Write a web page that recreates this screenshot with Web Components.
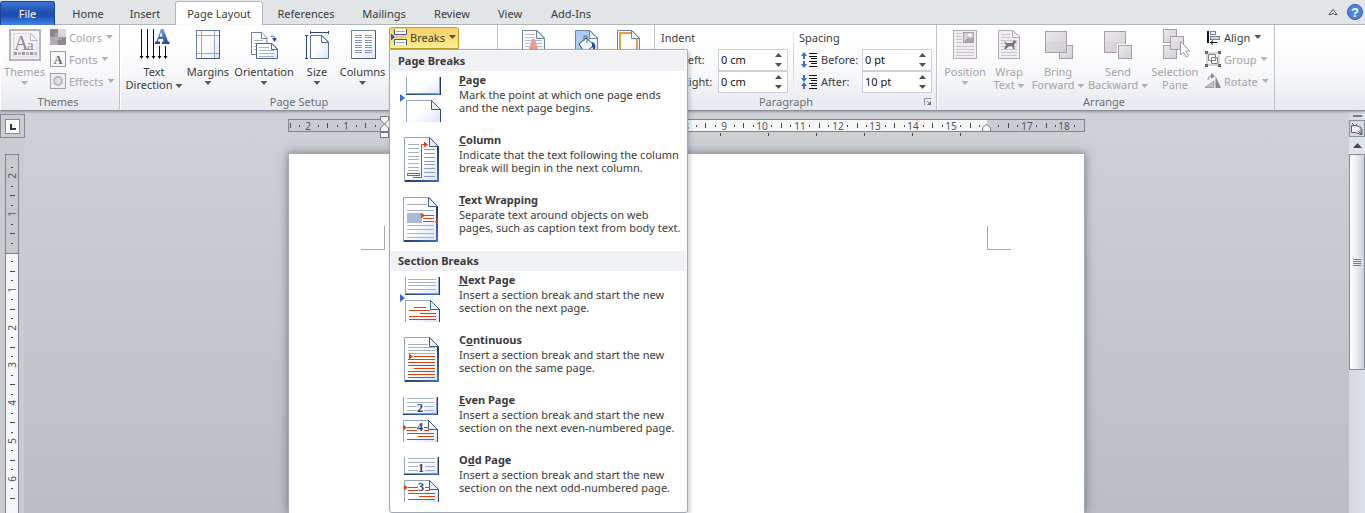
<!DOCTYPE html>
<html lang="en">
<head>
<meta charset="utf-8">
<title>Word - Page Layout</title>
<style>
html, body { margin: 0; height: 100%; overflow: hidden; }
body { font: 11px/13px "Noto Sans", "Open Sans", sans-serif; color: #3b3b3b; }
</style>
</head>
<body>
<word-window></word-window>
<script>
/* ---------- icon drawings ---------- */
const defs = `<defs>
<linearGradient id="pg" x1="0" y1="0" x2="1" y2="1"><stop offset=".5" stop-color="#fff"/><stop offset="1" stop-color="#d9e5fa"/></linearGradient>
<linearGradient id="ed" x1="0" y1="0" x2="1" y2="0"><stop offset="0" stop-color="#2b3f66"/><stop offset="1" stop-color="#3f6ec4"/></linearGradient>
<linearGradient id="ev" x1="0" y1="0" x2="0" y2="1"><stop offset="0" stop-color="#23365c"/><stop offset="1" stop-color="#4575cc"/></linearGradient>
<linearGradient id="gy" x1="0" y1="0" x2="1" y2="1"><stop offset="0" stop-color="#ece9ee"/><stop offset="1" stop-color="#d3cfd5"/></linearGradient>
<linearGradient id="bl" x1="0" y1="0" x2="0" y2="1"><stop offset="0" stop-color="#6fa0ee"/><stop offset="1" stop-color="#1c449c"/></linearGradient>
</defs>`;
const hl = (x1, x2, ys, c, w = 1) => ys.map(y => `<path d="M${x1} ${Math.floor(y) + .5}H${x2}" stroke="${c}" stroke-width="${w}"/>`).join('');
/* bottom part of a sheet, open at the top */
const sheetTop = x => `<rect x="${x}" y="2" width="34" height="17" fill="url(#pg)"/><path d="M${x + .5} 2V19" stroke="#8fa3c4"/><rect x="${x}" y="18" width="35" height="1" fill="#7f9bd0"/><rect x="${x}" y="19" width="35" height="1" fill="url(#ed)"/><rect x="${x + 33}" y="2" width="1" height="17" fill="#8aa6dc"/><rect x="${x + 34}" y="2" width="1" height="18" fill="#23365c"/>`;
/* top part of a sheet with a folded corner, open at the bottom */
const sheetBottom = x => `<path d="M${x + .5} 47V25.5H${x + 26}L${x + 34} 34V47Z" fill="url(#pg)"/><path d="M${x + .5} 47V25.5H${x + 26}" fill="none" stroke="#8fa3c4"/><path d="M${x + 25.5} 25.5L${x + 34.5} 34.5H${x + 25.5}Z" fill="#eef4ff" stroke="#3f5a8c"/><path d="M${x + 34.5} 34V47" stroke="#2d4778"/>`;
const sheetFull = x => `<path d="M${x + .5} 2.5H${x + 26}L${x + 34} 11V46.5H${x + .5}Z" fill="url(#pg)" stroke="#8fa3c4"/><rect x="${x + 1}" y="45" width="34" height="2" fill="url(#ed)"/><rect x="${x + 33}" y="11" width="2" height="36" fill="url(#ev)"/><path d="M${x + 25.5} 2.5L${x + 34.5} 11.5H${x + 25.5}Z" fill="#eef4ff" stroke="#3f5a8c"/>`;
const blueArrow = '<path d="M1 19L6 23L1 27Z" fill="#3a6ad8"/>';
const redArrow = (x, y) => `<path d="M${x} ${y - 3}L${x + 4} ${y}L${x} ${y + 3}Z" fill="#d8430f"/>`;
const L = '#a3b1cc', R = '#d8430f';
const num = (x, y, t) => `<text x="${x}" y="${y}" font-family="Liberation Serif, serif" font-weight="bold" font-size="12" fill="#1f3c78" text-anchor="middle">${t}</text>`;
const parity = (x, a, b) => sheetTop(x) + hl(x + 4, x + 31, [3, 7, 11, 15], L) + `<rect x="${x + 14}" y="9" width="7" height="9" fill="#fff"/>` + num(x + 17, 17, a)
  + sheetBottom(x) + hl(x + 4, x + 26, [32, 35], R) + hl(x + 4, x + 31, [38, 44], R) + hl(x + 15, x + 31, [41], R) + redArrow(x, 32.5) + `<rect x="${x + 14}" y="28" width="7" height="9" fill="#fff"/>` + num(x + 17, 36, b);
const page24 = (inner, c = '#6b83ab') => `<path d="M5.5 1.5H20L27.5 9V31H5.5Z" fill="url(#pg)" stroke="${c}"/>${inner}<path d="M19.5 1.5V9.5H27.5Z" fill="#f2f6ff" stroke="${c}"/>`;
const box = (x, y, s, h = s) => `<rect x="${x}.5" y="${y}.5" width="${s}" height="${h}" fill="url(#gy)" stroke="#a5a0a6"/>`;
const ud = (x, y, up, c = '#3a6fd8') => up ? `<path d="M${x - 3} ${y + 4}l3-4l3 4h-2v3h-2v-3z" fill="${c}"/>` : `<path d="M${x - 3} ${y + 4}l3 4l3-4h-2v-3h-2v3z" fill="${c}"/>`;

const ICONS = {
  themes: [32, 32, `<rect x="1" y="1" width="30" height="30" fill="#f7f4f8" stroke="#b9b4bb" stroke-width="2"/><path d="M4.5 4.5H22L28 11V28H4.5Z" fill="#f3f0f4" stroke="#dcd8de"/><path d="M21.5 4.5V11.5H28.5Z" fill="#fff" stroke="#b9b4bb"/><text x="5" y="21" font-family="Liberation Serif, serif" font-size="20" fill="#8d888f">A</text><text x="18" y="21" font-family="Liberation Serif, serif" font-size="15" fill="#8d888f">a</text>` + [5, 9, 13, 17, 21, 25].map((x, i) => `<rect x="${x}" y="23" width="3" height="3" fill="${i % 2 ? '#b9b4bb' : '#9b969d'}"/>`).join('')],
  colors: [16, 16, '<rect width="8" height="8" fill="#8d8890"/><rect x="8" width="8" height="8" fill="#ddd8de"/><rect y="8" width="8" height="8" fill="#b1acb3"/><rect x="8" y="8" width="8" height="8" fill="#8f8a91"/><rect x="5" y="4" width="7" height="7" fill="#c9c4ca" opacity=".4"/>'],
  fonts: [16, 16, '<rect x=".5" y=".5" width="15" height="15" fill="#f8f6f9" stroke="#a39ea5"/><text x="8" y="13" text-anchor="middle" font-family="Liberation Serif, serif" font-weight="bold" font-size="12" fill="#6c686e">A</text>'],
  effects: [16, 16, '<rect x=".5" y=".5" width="15" height="15" fill="#f1eef2" stroke="#a39ea5"/><circle cx="8" cy="8" r="4" fill="#e2dee4" stroke="#bdb8bf" stroke-width="2"/>'],
  textdir: [32, 32, '<path d="M3.5 0V29M9.5 0V29M15.5 0V29M21.5 17V29M27.5 17V29" stroke="#111"/><path d="M1.5 27h4l-2 3zM7.5 27h4l-2 3zM13.5 27h4l-2 3zM19.5 27h4l-2 3zM25.5 27h4l-2 3z" fill="#111"/><path fill-rule="evenodd" d="M22.5 0h3l4.500 12.500h1.500V15H24v-2.500h1.800l-.8-2.500h-4.300l-.9 2.500H22V15h-5v-2.500h1.500L22.300 2zM21.500 7.500h3L23 3z" fill="url(#bl)"/>'],
  margins: [26, 32, '<rect x="1.5" y="1.5" width="23" height="28" fill="url(#pg)" stroke="#6b83ab"/><path d="M6.5 2V29M19.5 2V29M2 6.5H24M2 24.5H24" stroke="#8fa9cf"/><path d="M24.500 2V29.500H2" fill="none" stroke="#47597c"/>'],
  orientation: [32, 32, '<path d="M3.5 3.5H14L19 9V25.5H3.5Z" fill="url(#pg)" stroke="#6b83ab"/><path d="M13.5 3.5V9.5H19" fill="#fff" stroke="#6b83ab"/>' + hl(6, 15, [11, 14, 17, 20], L) + '<path d="M8.5 14.5H24L29.5 20V29.5H8.5Z" fill="url(#pg)" stroke="#4f678f"/><path d="M23.5 14.5V20.5H29.5Z" fill="#fff" stroke="#4f678f"/>' + hl(11, 21, [18], L) + hl(11, 26, [21, 24, 27], L) + '<path d="M23 7.500c3-1 4 0 4 3" fill="none" stroke="#33507f"/><path d="M24 9h5l-2.500 4z" fill="#33507f"/>'],
  size: [32, 32, '<path d="M9.5 6.5H21L27.5 13V29.5H9.5Z" fill="url(#pg)" stroke="#5d7398"/><path d="M20.5 6.5V13.5H27.5Z" fill="#fff" stroke="#4f678f"/><path d="M10 3.5H27M9.5 2V5M27.5 2V5M5.5 7V29M4 6.5H7M4 29.5H7" stroke="#2c3f90"/>'],
  columns: [28, 32, '<rect x="2.5" y="1.5" width="24" height="28" fill="url(#pg)" stroke="#6b83ab"/>' + hl(6, 13, [6, 8, 11, 13, 16, 18, 21, 23], '#7f97c0') + hl(16, 23, [6, 8, 11, 13, 16, 18, 21, 23], '#7f97c0') + '<path d="M26.5 2V29.5H3" fill="none" stroke="#47597c"/>'],
  breaks: [16, 16, '<path d="M0 4.5L4 8L0 11.5Z" fill="#2554c4"/><path d="M3.5 0V5.5H15.5V0" fill="#fff" stroke="#41598c"/><path d="M3.5 16V10.5H15.5V16" fill="#fff" stroke="#41598c"/><path d="M5 2.5H14M5 13.5H14" stroke="#8fa6cf"/><path d="M5 8h10" stroke="#8fa6cf" stroke-dasharray="2 1"/>'],
  watermark: [32, 32, page24(hl(8, 25, [11, 14, 17, 20, 23, 26], '#b4bccb') + hl(8, 18, [5, 8], '#b4bccb') + '<path d="M15 10h3l5 17h-3l-1.5-4h-4L13 27h-3z" fill="#ea9c94"/>')],
  pagecolor: [32, 32, page24('<rect x="6" y="2" width="14" height="28" fill="#a9cdf3"/><path d="M9 15l7-6 8 7-9 8z" fill="#f2f6fb" stroke="#33435f"/><path d="M14 12V7h3v7" fill="none" stroke="#5a6a84"/><path d="M22 13c4 1 4 6 2 9l-2-5z" fill="#254a92"/>')],
  borders: [32, 32, page24('<path d="M20 4H8V29H25V9" fill="none" stroke="#e79b4d" stroke-width="2"/>')],
  before: [16, 16, ud(3, 0, true) + ud(3, 8, false) + hl(8, 16, [1, 4, 9, 14], '#111') + hl(10, 16, [6, 11], '#111')],
  after: [16, 16, ud(3, 0, false) + ud(3, 8, true) + hl(8, 16, [1, 4, 9, 14], '#111') + hl(10, 16, [6, 11], '#111')],
  indent: [16, 16, hl(2, 14, [2, 6, 10, 14], '#555')],
  position: [26, 32, '<rect x="1.5" y="1.5" width="23" height="28" fill="#f1edf2" stroke="#b1acb2"/>' + hl(4, 10, [4, 7, 10, 13], '#cac5cb') + hl(4, 22, [17, 20, 23, 26], '#cac5cb') + '<rect x="11.5" y="3.5" width="10" height="10" fill="#d8d3d9" stroke="#a39ea4"/><path d="M12 13l4-5 2 2 2-2 2 4v1z" fill="#aaa5ab"/><circle cx="18" cy="6" r="1.5" fill="#fff"/>'],
  wrap: [32, 32, '<path d="M5.5 1.5H20L26.5 8V29.5H5.5Z" fill="#f1edf2" stroke="#b1acb2"/><path d="M19.5 1.5V8.5H26.5Z" fill="#fff" stroke="#b1acb2"/>' + hl(8, 17, [5, 8], '#cac5cb') + hl(8, 24, [11, 14, 17, 20, 23, 26], '#cac5cb') + '<path d="M11 12l3 2h5l2-3 3 2-2 1-1 3 1 3h-2l-1-3h-3l-3 3h-2l2-4z" fill="#7c777d"/>'],
  forward: [32, 32, box(17, 16, 13) + box(3, 2, 21) + '<rect x="4" y="13" width="20" height="10" fill="#d3cdd4" opacity=".5"/>'],
  backward: [32, 32, box(2, 2, 21) + '<rect x="3" y="13" width="20" height="10" fill="#d3cdd4" opacity=".5"/><rect x="15" y="15" width="16" height="16" fill="#fff"/>' + box(16, 16, 13)],
  selection: [32, 32, box(4, 0, 13) + box(4, 16, 13) + box(11, 7, 13) + '<path d="M21.5 12.5V26l3-3 2.500 5 2.500-1-2.500-5h4z" fill="#fff" stroke="#a09ba1"/>'],
  align: [16, 16, '<path d="M3 2V14" stroke="#111" stroke-width="2"/><rect x="5.5" y="2.5" width="5" height="3" fill="#e8eef8" stroke="#7a8494"/><rect x="5.5" y="7.5" width="9" height="3" fill="#c5d6f0" stroke="#7a8494"/><path d="M5 13.5H12M8 11.500l-2.500 2 2.500 2" fill="none" stroke="#111"/>'],
  group: [16, 16, '<path d="M2 2H14V14H2Z" fill="none" stroke="#b5b0b6"/><path d="M3.5 3.5h7v6h-7zM6.5 6.5h6v6h-6z" fill="none" stroke="#858086"/><path d="M0 0h3v3H0zM13 0h3v3h-3zM0 13h3v3H0zM13 13h3v3h-3z" fill="#6a666b"/>'],
  rotate: [16, 16, '<path d="M0 14.5H9V8z" fill="#c4bfc5" stroke="#a5a0a6"/><path d="M10.5 3V15H16z" fill="#8b868c"/><path d="M3 7c0-3 2-4 4-4" fill="none" stroke="#8b868c"/><path d="M6 0l4 3-4 3z" fill="#8b868c"/>'],
  m_page: [44, 50, blueArrow + sheetTop(7) + sheetBottom(7)],
  m_column: [44, 50, sheetFull(5) + hl(9, 20, [9, 13, 17, 21, 24, 28, 32, 35], L) + hl(25, 36, [14, 18, 22, 26, 29, 33, 37, 41], '#8d9dbe') + '<path d="M8.5 38.5H20.5V40.5H8.5ZM14 42.5H22.5V9.5H29" fill="none" stroke="#d8430f"/>' + redArrow(25, 9.5)],
  m_wrap: [44, 50, sheetFull(4) + hl(8, 28, [9], L) + hl(8, 35, [15, 30, 34, 38, 42], L) + '<rect x="8" y="18" width="15" height="10" fill="#a9b8d6"/>' + hl(24, 35, [20, 23, 26], R) + redArrow(22, 20.5) + '<path d="M39 23.5l-3 3 3 3z" fill="#d8430f"/>'],
  m_next: [44, 50, blueArrow + sheetTop(6) + hl(9, 37, [4, 7, 10, 14], L) + sheetBottom(6) + hl(15, 27, [32], R) + hl(10, 31, [35], R) + hl(21, 37, [38], R) + hl(10, 37, [41, 44], R)],
  m_cont: [44, 50, sheetFull(5) + hl(9, 29, [9], L) + hl(9, 36, [12, 15, 18], L) + hl(15, 36, [21], R) + hl(9, 36, [24, 27, 30], R) + hl(15, 36, [33], R) + hl(9, 36, [36, 39, 42], R) + redArrow(10, 21.5)],
  m_even: [44, 50, parity(4, '2', '4')],
  m_odd: [44, 50, parity(5, '1', '3')],
  caret: [10, 8, '<path d="M1 6.5L5 1.5L9 6.5H6.500L5 5L3.500 6.500Z" fill="#fff" stroke="#444"/>'],
  help: [16, 16, '<circle cx="8" cy="8" r="7.5" fill="#4b84dd" stroke="#2b5db5"/><text x="8" y="13" text-anchor="middle" font-family="Liberation Sans, sans-serif" font-weight="bold" font-size="13" fill="#fff">?</text>'],
  launcher: [8, 8, '<path d="M.5 7V.5H7" fill="none" stroke="#8a8f98"/><path d="M3 3l3 3" stroke="#8a8f98"/><path d="M7 3V7H3z" fill="#6f747d"/>'],
  tabstop: [13, 13, '<rect width="13" height="13" fill="#fff"/><path d="M5 4V9H10" fill="none" stroke="#333" stroke-width="2"/>'],
  rulertoggle: [14, 14, '<path d="M1.5 3.5H6L11 5.5V12.5L5 10.5H1.500ZM2 1l3 3 2-2M8 9l4 4v-6" fill="#fbeff3" stroke="#555c66"/>'],
  up: [9, 5, '<path d="M0 5L4.5 0L9 5Z" fill="#444b55"/>'],
};

/* ---------- element helper ---------- */
function define(name, css, html, ready) {
  const t = document.createElement('template');
  t.innerHTML = `<style>*{box-sizing:border-box}button,input{font:inherit;color:inherit;margin:0;padding:0;border:0;background:none}${css}</style>`;
  customElements.define(name, class extends HTMLElement {
    connectedCallback() {
      if (this.shadowRoot) return;
      const root = this.attachShadow({ mode: 'open' });
      root.append(t.content.cloneNode(true));
      const body = document.createElement('template');
      body.innerHTML = html(k => this.getAttribute(k) || '', this);
      root.append(body.content);
      if (ready) ready(this, root);
    }
  });
}

define('wd-icon', ':host{display:block;flex:none;line-height:0}svg{display:block}', a => {
  const [w, h, body] = ICONS[a('name')];
  return `<svg width="${w}" height="${h}" viewBox="0 0 ${w} ${h}" fill="none" aria-hidden="true">${defs}${body}</svg>`;
});

define('wd-arrow', `:host{display:inline-block;width:7px;height:4px;background:currentColor;clip-path:polygon(0 0,100% 0,50% 100%);vertical-align:middle;opacity:.85}`, () => '');

define('ribbon-tab', `:host{display:block;min-width:var(--w)}
button{width:100%;height:24px;border:1px solid transparent;border-bottom:0;text-align:center;white-space:nowrap;line-height:16px}
:host([active]) button{background:#fff;border-color:#b3b7bd;border-radius:3px 3px 0 0;height:25px}
:host([file]) button{background:linear-gradient(#3a74d2,#1f50b0 45%,#1c4fb4 60%,#3f86e4);color:#fff;border-color:#1a4390;border-radius:3px 3px 0 0}`,
  a => `<button role="tab"><slot></slot></button>`);

define('ribbon-tabs', `:host{display:flex;height:25px;padding-top:1px;background:#e1e5e8;border-bottom:1px solid #b6babf}
nav{display:flex;flex:1;min-width:0}nav ribbon-tab:first-child{margin-right:3px}nav ribbon-tab[active]{margin-left:3px}
.tools{display:flex;align-items:center;gap:9px;padding:0 2px 2px 0}`,
  () => `<nav role="tablist">${[['File', 55, 'file'], ['Home', 60], ['Insert', 54], ['Page Layout', 88, 'active'], ['References', 86], ['Mailings', 70], ['Review', 66], ['View', 50], ['Add-Ins', 72]]
    .map(([t, w, f]) => `<ribbon-tab ${f || ''} style="--w:${w}px">${t}</ribbon-tab>`).join('')}</nav>
  <div class="tools"><button aria-label="Minimize the Ribbon"><wd-icon name="caret"></wd-icon></button><button aria-label="Help"><wd-icon name="help"></wd-icon></button></div>`);

define('ribbon-group', `:host{display:flex;flex-direction:column;flex:none;width:var(--w);padding-left:1px;border-right:1px solid #bfc3ca;box-shadow:inset 1px 0 #fff}
.body{display:flex;height:68px;padding-top:2px}
footer{display:flex;align-items:center;height:17px;padding-right:4px;color:#6a6e78}
footer span{flex:1;text-align:center}footer button{padding-left:8px}`,
  a => `<div class="body"><slot></slot></div><footer><span>${a('label')}</span>${a('launcher') ? '<button aria-label="Dialog launcher"><wd-icon name="launcher"></wd-icon></button>' : ''}</footer>`);

define('ribbon-button', `:host{display:block;flex:none;width:var(--w)}
button{display:flex;flex-direction:column;align-items:center;width:100%;height:66px;padding-top:2px;white-space:nowrap}
button:disabled{color:#a5a3aa}
.label{padding-top:4px;text-align:center;line-height:13px}
:host([stack]) wd-arrow{display:block;margin:3px auto 0}`,
  (a, el) => `<button ${el.hasAttribute('disabled') ? 'disabled' : ''} aria-label="${a('name') || el.textContent}"><wd-icon name="${a('icon')}"></wd-icon><span class="label"><slot></slot>${el.hasAttribute('drop') ? ' <wd-arrow></wd-arrow>' : ''}</span></button>`);

define('ribbon-small', `:host{display:block}
button{display:flex;align-items:center;gap:3px;height:22px;padding:0 2px 2px 2px;white-space:nowrap}
button:disabled{color:#a5a3aa}
wd-arrow{margin-left:1px}
:host([pressed]) button{border:1px solid #c29b29;border-radius:3px 3px 0 0;background:linear-gradient(#f8d26a,#fbdc74 50%,#fff09a);padding:0 2px 2px 1px}`,
  (a, el) => `<button ${el.hasAttribute('disabled') ? 'disabled' : ''}><wd-icon name="${a('icon')}"></wd-icon><slot></slot><wd-arrow></wd-arrow></button>`);

define('spin-field', `:host{display:flex;align-items:center;height:22px}
label{margin-left:var(--gap);padding-bottom:2px;width:var(--lw);white-space:nowrap}
.box{display:flex;width:70px;height:22px;border:1px solid #cdd0d8;background:#fff}
input{flex:1;min-width:0;padding:0 0 2px 2px;color:#111;outline:0}
.spin{display:grid;grid-template-rows:1fr 1fr;width:17px}
.spin button{display:grid;place-items:center}
.spin wd-arrow{color:#333}.up{transform:rotate(180deg)}`,
  a => `<wd-icon name="${a('icon')}"></wd-icon><label for="f">${a('label')}</label><div class="box"><input id="f" type="text" value="${a('value')}"><div class="spin"><button aria-label="Increase"><wd-arrow class="up"></wd-arrow></button><button aria-label="Decrease"><wd-arrow></wd-arrow></button></div></div>`);

define('spin-section', `:host{display:block}h3{margin:0;padding-left:var(--hp);font:inherit;height:22px;line-height:22px}.rows{padding-left:var(--rp)}`,
  a => `<h3>${a('label')}</h3><div class="rows"><slot></slot></div>`);

/* ---------- Breaks menu ---------- */
define('menu-item', `:host{display:block}
button{display:flex;gap:16px;width:100%;height:60px;padding:4px 4px 0 8px;text-align:left}
.text{display:block;white-space:nowrap}b,.desc{display:block}b{line-height:14px;padding-bottom:1px;margin-top:-2px;}
button:hover{background:#fff3c4}`,
  a => `<button role="menuitem"><wd-icon name="${a('icon')}"></wd-icon><span class="text"><b><slot name="title"></slot></b><span class="desc"><slot></slot></span></span></button>`);

define('menu-heading', `:host{display:block;height:20px;padding-left:7px;background:#f0f1f5;font-weight:bold;line-height:20px}`, () => '<slot></slot>');

define('breaks-menu', `:host{display:block;width:299px;padding:1px;background:#fff;border:1px solid #a2a7b0;border-radius:0 2px 3px 3px;box-shadow:2px 2px 4px rgba(60,60,90,.25)}`,
  () => {
    const item = (icon, title, l1, l2) => `<menu-item icon="${icon}"><span slot="title">${title}</span>${l1}<br>${l2}</menu-item>`;
    const ins = 'Insert a section break and start the new';
    return `<div role="menu" aria-label="Breaks"><menu-heading>Page Breaks</menu-heading>
${item('m_page', '<u>P</u>age', 'Mark the point at which one page ends', 'and the next page begins.')}
${item('m_column', '<u>C</u>olumn', 'Indicate that the text following the column', 'break will begin in the next column.')}
${item('m_wrap', '<u>T</u>ext Wrapping', 'Separate text around objects on web', 'pages, such as caption text from body text.')}
<menu-heading>Section Breaks</menu-heading>
${item('m_next', '<u>N</u>ext Page', ins, 'section on the next page.')}
${item('m_cont', 'C<u>o</u>ntinuous', ins, 'section on the same page.')}
${item('m_even', '<u>E</u>ven Page', ins, 'section on the next even-numbered page.')}
${item('m_odd', 'O<u>d</u>d Page', ins, 'section on the next odd-numbered page.')}</div>`;
  });

/* ---------- ribbon ---------- */
define('word-ribbon', `:host{display:flex;height:86px;background:linear-gradient(#fff 20%,#f6f7f9 60%,#e6e9ee);border-bottom:1px solid #8b9098;box-shadow:0 1px 2px rgba(80,85,95,.45);position:relative;z-index:2}
.col{display:flex;flex-direction:column;align-items:flex-start}
.anchor{position:relative;margin-left:1px}
.anchor breaks-menu{position:absolute;top:100%;left:0}
.rule{width:1px;margin:4px 5px 4px;background:linear-gradient(#eceef1,#c9ccd3,#eceef1)}
.setup{padding-left:2px;display:flex}.bg{display:flex;padding-left:6px}.arr{display:flex;padding-left:2px}.arr .col{padding-left:1px}`,
  () => `<ribbon-group label="Themes" style="--w:120px"><ribbon-button icon="themes" disabled drop stack style="--w:47px">Themes</ribbon-button>
<div class="col"><ribbon-small icon="colors" disabled>Colors</ribbon-small><ribbon-small icon="fonts" disabled>Fonts</ribbon-small><ribbon-small icon="effects" disabled>Effects</ribbon-small></div></ribbon-group>
<ribbon-group label="Page Setup" launcher="1" style="--w:378px"><div class="setup">
<ribbon-button icon="textdir" drop style="--w:62px">Text<br>Direction</ribbon-button>
<ribbon-button icon="margins" drop stack style="--w:46px">Margins</ribbon-button>
<ribbon-button icon="orientation" drop stack style="--w:66px">Orientation</ribbon-button>
<ribbon-button icon="size" drop stack style="--w:40px">Size</ribbon-button>
<ribbon-button icon="columns" drop stack style="--w:51px">Columns</ribbon-button>
<div class="col"><div class="anchor"><ribbon-small icon="breaks" pressed>Breaks</ribbon-small><breaks-menu></breaks-menu></div></div></div></ribbon-group>
<ribbon-group label="" style="--w:157px"><div class="bg">
<ribbon-button icon="watermark" name="Watermark" style="--w:56px"></ribbon-button>
<ribbon-button icon="pagecolor" name="Page Color" style="--w:50px"></ribbon-button>
<ribbon-button icon="borders" name="Page Borders" style="--w:34px"></ribbon-button></div></ribbon-group>
<ribbon-group label="Paragraph" launcher="1" style="--w:282px">
<spin-section label="Indent" style="--hp:5px;--rp:4px"><spin-field icon="indent" label="Left:" value="0 cm" style="--gap:6px;--lw:36px"></spin-field><spin-field icon="indent" label="Right:" value="0 cm" style="--gap:6px;--lw:36px"></spin-field></spin-section>
<div class="rule"></div>
<spin-section label="Spacing" style="--hp:0px;--rp:2px"><spin-field icon="before" label="Before:" value="0 pt" style="--gap:4px;--lw:41px"></spin-field><spin-field icon="after" label="After:" value="10 pt" style="--gap:4px;--lw:41px"></spin-field></spin-section></ribbon-group>
<ribbon-group label="Arrange" style="--w:338px"><div class="arr">
<ribbon-button icon="position" disabled drop stack style="--w:50px">Position</ribbon-button>
<ribbon-button icon="wrap" disabled drop style="--w:38px">Wrap<br>Text</ribbon-button>
<ribbon-button icon="forward" disabled drop style="--w:60px">Bring<br>Forward</ribbon-button>
<ribbon-button icon="backward" disabled drop style="--w:60px">Send<br>Backward</ribbon-button>
<ribbon-button icon="selection" disabled style="--w:54px">Selection<br>Pane</ribbon-button>
<div class="col"><ribbon-small icon="align">Align</ribbon-small><ribbon-small icon="group" disabled>Group</ribbon-small><ribbon-small icon="rotate" disabled>Rotate</ribbon-small></div></div></ribbon-group>`);

/* ---------- rulers: one centimetre is 37.8 units ---------- */
const CM = 37.8;
define('h-ruler', ':host{display:block;line-height:0}', () => {
  let s = '';
  for (let q = -10; q <= 73; q++) {
    const x = Math.round(96 + q * CM / 4), n = Math.abs(q / 4);
    if (q === 0 || q === 64) continue;
    if (q % 4 === 0) s += `<text x="${x}" y="16" text-anchor="middle">${n}</text>`;
    else if (q % 2 === 0) s += `<path d="M${x + .5} 9V14"/>`;
    else s += `<path d="M${x + .5} 11V13"/>`;
  }
  let t = '';
  for (let x = 144; x < 700; x += 48) t += `<path d="M${x + .5} 19V22"/>`;
  return `<svg width="797" height="26" font-family="Noto Sans, sans-serif" font-size="10" fill="#50555d"><rect x=".5" y="5.5" width="796" height="12" fill="#c9ccd1" stroke="#7f858e"/><rect x="98" y="6" width="601" height="11" fill="#f7f7f8"/><g stroke="#454b54">${s.replace(/<text/g, '<text stroke="none"')}${t}</g>
<g fill="#f4f4f5" stroke="#777c84"><path d="M92.5 2.5H100.5V6L96.5 10L92.5 6Z"/><path d="M96.5 10L100.5 14V17.5H92.5V14Z"/><rect x="92.5" y="18.5" width="8" height="5"/><path d="M698.5 10L702.5 14V17.5H694.5V14Z"/></g></svg>`;
});
define('v-ruler', ':host{display:block;overflow:hidden;line-height:0}svg{display:block}', () => '', (el, root) => {
  const svgHost = document.createElement('div');
  root.append(svgHost);
  const draw = () => {
    const h = el.clientHeight;
    let s = '';
    for (let q = -10; 98 + q * CM / 4 < h - 6; q++) {
      const y = Math.round(98 + q * CM / 4), n = Math.abs(q / 4);
      if (q === 0 || y < 6) continue;
      if (q % 4 === 0) s += `<text transform="translate(11 ${y}) rotate(-90)" text-anchor="middle" stroke="none">${n}</text>`;
      else if (q % 2 === 0) s += `<path d="M5 ${y + .5}H10"/>`;
      else s += `<path d="M6 ${y + .5}H8"/>`;
    }
    svgHost.innerHTML = `<svg width="14" height="${h}" font-family="Noto Sans, sans-serif" font-size="10" fill="#50555d"><rect x=".5" y=".5" width="13" height="${h + 5}" fill="#c6c9ce" stroke="#7f858e"/><rect x="1" y="99" width="12" height="${h}" fill="#f7f7f8"/><path d="M0 99.5H14" stroke="#7f858e"/><g stroke="#454b54">${s}</g></svg>`;
  };
  new ResizeObserver(draw).observe(el);
});

define('scroll-bar', `:host{display:flex;flex-direction:column;background:linear-gradient(90deg,#d5d8de,#dee2eb)}
.split{height:9px;display:grid;place-items:center}.split i{width:9px;height:2px;background:#777c84}
.toggle{height:17px;border:1px solid #8a9098;background:#d8dbe0;display:grid;place-items:center}
.up{height:17px;display:grid;place-items:center;background:#e0e3e9}
.thumb{flex:3;border:1px solid #868c95;background:linear-gradient(90deg,#fff,#e9ecf1 50%,#cdd1d8);display:grid;place-items:center}
.thumb i{width:8px;height:7px;background:repeating-linear-gradient(#777c84 0 1px,transparent 1px 2px)}
.rest{flex:2}`,
  () => `<div class="split"><i></i></div><button class="toggle" aria-label="View Ruler"><wd-icon name="rulertoggle"></wd-icon></button><button class="up" aria-label="Scroll up"><wd-icon name="up"></wd-icon></button><div class="thumb"><i></i></div><div class="rest"></div>`);

define('document-page', `:host{display:flex;justify-content:space-between;box-sizing:border-box;width:797px;flex:1;margin-top:13px;padding:72px 73px 0 72px;background:#fff;border:1px solid #a3a9b2;border-bottom:0;box-shadow:0 0 9px rgba(75,85,100,.7)}
i{width:24px;height:24px;border:0 solid #a9a9a9;border-bottom-width:1px}.l{border-right-width:1px}.r{border-left-width:1px}`, () => '<i class="l"></i><i class="r"></i>');

define('word-workspace', `:host{display:grid;grid-template-columns:24px minmax(0,1fr) 16px;flex:1;min-height:0;overflow:hidden;background:linear-gradient(#ced2d7,#babdc2)}
.left{display:flex;flex-direction:column;min-height:0;background:#c9cdd2}
.left button{flex:none;width:25px;height:24px;margin-top:3px;border:1px solid #858b94;display:grid;place-items:center}
.left button span{border:1px solid #858b94}
v-ruler{flex:1;min-height:0;margin:16px 0 0 5px}
.mid{display:flex;flex-direction:column;align-items:center;padding-top:3px;overflow:hidden;min-width:0}`,
  () => `<div class="left"><button aria-label="Left tab"><span><wd-icon name="tabstop"></wd-icon></span></button><v-ruler></v-ruler></div><main class="mid"><h-ruler></h-ruler><document-page></document-page></main><scroll-bar></scroll-bar>`);

define('word-window', `:host{display:flex;flex-direction:column;height:100vh;overflow:hidden}ribbon-tabs,word-ribbon{flex:none}`,
  () => `<ribbon-tabs></ribbon-tabs><word-ribbon></word-ribbon><word-workspace></word-workspace>`);
</script>
</body>
</html>
